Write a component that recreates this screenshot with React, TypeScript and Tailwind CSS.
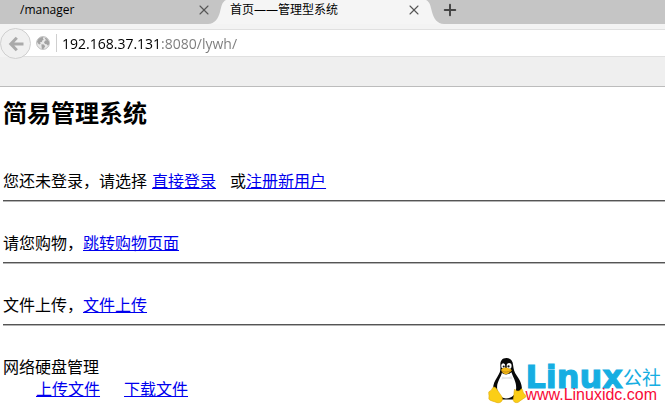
import { Plus, X } from "lucide-react";

const uiFont = "font-['Open_Sans','Noto_Sans_CJK_SC',sans-serif]";

const TabEdge = ({ flip }: { flip?: boolean }) => (
    <svg viewBox="0 0 18 24" className={`h-6 w-[18px] shrink-0 ${flip ? "-scale-x-100" : ""}`} aria-hidden="true">
        <path d="M0 24C7 23.500 10 19 12 12C13.500 6 14 2 18 0V24Z" fill="#f5f5f5" />
    </svg>
);

const CloseButton = () => (
    <button type="button" aria-label="关闭" className="flex h-5 w-4 items-center justify-center text-[#555]">
        <X className="size-4 shrink-0" strokeWidth={1.6} />
    </button>
);

const TabBar = () => (
    <div className="flex h-6 bg-[#c5c5c5] text-xs">
        <div className="flex w-[208px] shrink-0 justify-between pl-5">
            <button type="button" className="h-5">/manager</button>
            <div className="-mr-1"><CloseButton /></div>
        </div>
        <TabEdge />
        <div className="flex w-[200px] shrink-0 justify-between bg-[#f5f5f5] pl-1">
            <button type="button" className="h-5">首页——管理型系统</button>
            <div className="pr-1"><CloseButton /></div>
        </div>
        <TabEdge flip />
        <button type="button" aria-label="新标签页" className="-ml-1 flex h-5 w-5 items-center justify-center text-[#444]">
            <Plus className="size-[18px] shrink-0" strokeWidth={2.6} />
        </button>
    </div>
);

const GlobeIcon = () => (
    <svg viewBox="0 0 14 14" className="size-[14px] shrink-0" aria-hidden="true">
        <circle cx="7" cy="7" r="6.400" fill="#e9e9e9" stroke="#bdbdbd" strokeWidth="1" />
        <path d="M1 5.500L2.500 2.700L5 1.200L7.600 1L6.800 2.400L7.800 3.400L6.300 4.500L5.800 6L4 6.300L4.700 7.700L3.300 8.600L1.800 7.200ZM8.500 1.600L11 2.600L13 5.400L13.100 8L12 9.800L10.600 8.200L9 8L8 6.300L9.300 4.600L10.800 4.300L9.300 3.300ZM5.400 8.300L7.800 8.600L9.200 10.200L7.600 12.800L6 12.900L5.600 11Z" fill="#a3a3a3" />
    </svg>
);

const AddressBar = () => (
    <div className="flex h-[33px] items-end bg-[#f3f3f3]">
        <button
            type="button"
            aria-label="后退"
            className="z-10 -mb-[2px] flex size-[31px] shrink-0 items-center justify-center rounded-full border border-[#cfcfcf] bg-[#f0f0f0]"
        >
            <svg viewBox="0 0 16 16" className="size-4" fill="none" stroke="#aaa" strokeWidth="3" aria-hidden="true">
                <path d="M8.800 1.800L2.800 8L8.800 14.200M3 8H15.500" />
            </svg>
        </button>
        <div className="-ml-3 flex h-7 grow items-center border-y border-[#e0e0e0] bg-white pl-[17px]">
            <GlobeIcon />
            <div className="mr-[5px] ml-[6px] h-[18px] w-px bg-[#cfcfcf]" />
            <input
                type="text"
                aria-label="地址"
                defaultValue="192.168.37.131:8080/lywh/"
                className="h-6 min-w-0 grow bg-[linear-gradient(90deg,#000_99px,#7a7a7a_99px)] bg-clip-text text-sm text-transparent caret-black outline-none"
            />
        </div>
    </div>
);

const Link = ({ children }: { children: string }) => (
    <a href="#" className="text-[#0000ee] underline">{children}</a>
);

const Rule = () => <hr className="mt-2 mb-[30px] border-t border-b border-t-[#555] border-b-[#b4b4b4]" />;

const Tux = () => (
    <svg viewBox="0 0 38 46" className="h-[47px] w-[39px] shrink-0" aria-hidden="true">
        <path d="M18 1C13.500 1 11.800 4 12 8.500C12.300 13 12 15 9 19.500C6 24 4.500 28 5 33L11 41.500H27L33 34C34 28 31 22 28 18C25.500 14.500 25 12 24.500 8C24.200 3.500 22 1 18 1Z" fill="#080808" />
        <path d="M13.500 15.500C12.500 20 9 24 8.800 29C8.600 34 11 40 17.500 40.500C24 40.500 27.500 36 27.500 30C27.500 24 24.500 20 22.800 15C20 17.500 16 18 13.500 15.500Z" fill="#fff" />
        <path d="M14 19C16.500 20.500 21 20 23 18.500L24 22C20 21 16 21 13 22Z" fill="#e5e5e5" />
        <ellipse cx="14.800" cy="8.700" rx="2" ry="2.600" fill="#fff" />
        <ellipse cx="20.600" cy="8.700" rx="2.400" ry="2.800" fill="#fff" />
        <circle cx="15.300" cy="9.200" r="1" fill="#111" />
        <circle cx="20" cy="9.200" r="1.100" fill="#111" />
        <path d="M12.800 12.500C14.500 10.500 17 9.800 19 10.800C21 11.500 23.500 11.800 23 13.500C21 15.300 19 17 16.800 16.800C14.500 16.300 13 14.500 12.800 12.500Z" fill="#f5b915" />
        <path d="M13.500 13.700C16 15.500 19.500 14.800 22.500 13.300" fill="none" stroke="#a66d08" strokeWidth=".6" />
        <path d="M5.500 29.500C3.500 29.800 4.500 32.500 1.500 33.500C-.5 34.200 1.500 37 .8 40C.2 42.500 4 42.800 7.500 44.200C10.500 45.500 13.500 44.500 14 41.500C14.200 38.500 11.500 36.500 9.500 33C8.300 31 7 29.300 5.500 29.500Z" fill="#fbce16" stroke="#dfa708" strokeWidth=".6" />
        <path d="M26 31.500C25 34.500 25.700 37.500 24.700 40.500C24 43.500 26.500 45.500 29.500 44.300C32 42.700 33.500 41 36 39.800C38.500 38.500 36 36.800 34.700 35.300C33.800 34 34.300 31.500 32.500 31C31 34 28 34 26 31.500Z" fill="#fbce16" stroke="#dfa708" strokeWidth=".6" />
    </svg>
);

const Watermark = () => (
    <div className="absolute right-1 bottom-0 flex items-end pb-[2px]">
        <Tux />
        <div className="-ml-[2px]">
            <div className="flex items-end text-[#16aee2]">
                <span className="font-['DejaVu_Sans',sans-serif] text-[32px] leading-[18px] font-bold [-webkit-text-stroke:1px]">Linux</span>
                <span className="font-['Noto_Sans_CJK_SC',sans-serif] text-[19px] leading-[18px]">公社</span>
            </div>
            <div className="font-['Liberation_Sans',sans-serif] text-base leading-[18px] text-[#f80a38]">www.Linuxidc.com</div>
        </div>
    </div>
);

export default function App() {
    return (
        <div className={`relative min-h-screen overflow-hidden bg-white text-black ${uiFont}`}>
            <header className="border-b border-[#bcbcbc] bg-[#efefef] pb-[29px]">
                <TabBar />
                <AddressBar />
            </header>

            <main className="pl-[3px] text-base leading-[22px]">
                <h1 className="pt-[10px] pb-[41px] text-2xl leading-8 font-bold">简易管理系统</h1>
                <p className="flex">
                    <span className="mr-[5px]">您还未登录，请选择</span>
                    <Link>直接登录</Link>
                    <span className="ml-[14px]">或</span>
                    <Link>注册新用户</Link>
                </p>
                <Rule />
                <p>请您购物，<Link>跳转购物页面</Link></p>
                <Rule />
                <p>文件上传，<Link>文件上传</Link></p>
                <Rule />
                <p>网络硬盘管理</p>
                <p className="flex gap-6 pl-[33px]">
                    <Link>上传文件</Link>
                    <Link>下载文件</Link>
                </p>
            </main>
            <Watermark />
        </div>
    );
}
